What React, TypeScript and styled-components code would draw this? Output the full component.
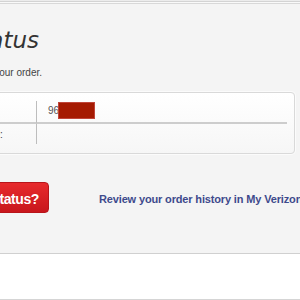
import React from "react";
import styled, { createGlobalStyle } from "styled-components";

const Global = createGlobalStyle`
  html, body { margin: 0; padding: 0; background: #f4f4f4; }
  body { font-family: "Liberation Sans", Arial, sans-serif; }
  * { box-sizing: border-box; }
`;

const Page = styled.div`
  width: 300px;
  height: 300px;
  overflow: hidden;
  display: flex;
  flex-direction: column;
  background: #f4f4f4;
`;

const Header = styled.div`
  height: 4px;
  padding-top: 1px;
  background: #ececec;
`;

const HeaderRule = styled.div`
  height: 3px;
  border-top: 1px solid #d3d3d3;
  border-bottom: 1px solid #d8d8d8;
  background: #f9f9f9;
`;

const Main = styled.main`
  height: 250px;
  border-bottom: 1px solid #d0d0d0;
  background: #f4f4f4;
  overflow: hidden;
`;

const Column = styled.div`
  margin-left: -103px;
  width: 398px;
  display: flex;
  flex-direction: column;
`;

/* right edge of the heading text sits at x = 39 */
const TitleRow = styled.div`
  width: 142px;
  margin-top: 23px;
  display: flex;
  justify-content: flex-end;
`;

const Title = styled.h1`
  margin: 0;
  flex: none;
  font-family: "DejaVu Sans", sans-serif;
  font-style: italic;
  font-weight: normal;
  font-size: 23px;
  line-height: 27px;
  color: #333;
  white-space: nowrap;
`;

const IntroRow = styled.div`
  width: 145px;
  margin-top: 13px;
  display: flex;
  justify-content: flex-end;
`;

const Intro = styled.p`
  margin: 0;
  flex: none;
  font-size: 10px;
  line-height: 12px;
  color: #444;
  white-space: nowrap;
`;

const Card = styled.div`
  margin-top: 13px;
  padding: 8px 7px 9px 32px;
  border: 1px solid #d9d9d9;
  border-radius: 4px;
  background: linear-gradient(#ffffff, #f6f6f6);
  box-shadow: 0 0 0 1px #fbfbfb;
  display: grid;
  grid-template-columns: 107px 1fr;
`;

const Label = styled.div<{ $first?: boolean }>`
  display: flex;
  align-items: center;
  height: ${(p) => (p.$first ? "23px" : "20px")};
  border-right: 1px solid #bdbdbd;
  border-bottom: ${(p) => (p.$first ? "2px solid #cdcdcd" : "none")};
  font-size: 10px;
  color: #444;
  white-space: nowrap;
`;

const Value = styled.div<{ $first?: boolean }>`
  display: flex;
  align-items: center;
  height: ${(p) => (p.$first ? "23px" : "20px")};
  padding-left: 11px;
  padding-bottom: ${(p) => (p.$first ? "2px" : "0")};
  border-bottom: ${(p) => (p.$first ? "2px solid #cdcdcd" : "none")};
  font-size: 10px;
  color: #555;
`;

const Redacted = styled.span`
  display: inline-block;
  width: 37px;
  height: 17px;
  margin-left: -1px;
  background: #a51a02;
  border: 1px solid #c0453a;
`;

/* button column ends at x = 49, link starts at x = 99 */
const Actions = styled.div`
  margin-top: 28px;
  display: grid;
  grid-template-columns: 152px auto;
  column-gap: 50px;
  align-items: start;
`;

const ButtonCell = styled.div`
  display: flex;
  justify-content: flex-end;
`;

const RedButton = styled.button`
  flex: none;
  height: 31px;
  padding: 2px 9px 0 12px;
  line-height: 29px;
  border: 1px solid #b8141a;
  border-radius: 4px;
  background: linear-gradient(#e72a2c, #c8161c);
  color: #fff;
  font-family: "Liberation Sans", Arial, sans-serif;
  font-weight: bold;
  font-size: 14px;
  letter-spacing: -0.4px;
  white-space: nowrap;
  cursor: pointer;
`;

const HistoryLink = styled.a`
  margin-top: 11px;
  font-size: 11px;
  line-height: 13px;
  font-weight: bold;
  letter-spacing: -0.15px;
  color: #3e4a8c;
  text-decoration: none;
  white-space: nowrap;
`;

const Footer = styled.footer`
  height: 46px;
  background: #fff;
  border-bottom: 1px solid #d5d5d5;
`;

export default function App() {
  return (
    <>
      <Global />
      <Page>
        <Header>
          <HeaderRule />
        </Header>
        <Main>
          <Column>
            <TitleRow>
              <Title>Order Status</Title>
            </TitleRow>
            <IntroRow>
              <Intro>Check the status of your order.</Intro>
            </IntroRow>
            <Card>
              <Label $first>Order Number:</Label>
              <Value $first>
                96
                <Redacted />
              </Value>
              <Label>Billing Zip Code:</Label>
              <Value />
            </Card>
            <Actions>
              <ButtonCell>
                <RedButton>Check Status?</RedButton>
              </ButtonCell>
              <HistoryLink href="#">Review your order history in My Verizon</HistoryLink>
            </Actions>
          </Column>
        </Main>
        <Footer />
      </Page>
    </>
  );
}
